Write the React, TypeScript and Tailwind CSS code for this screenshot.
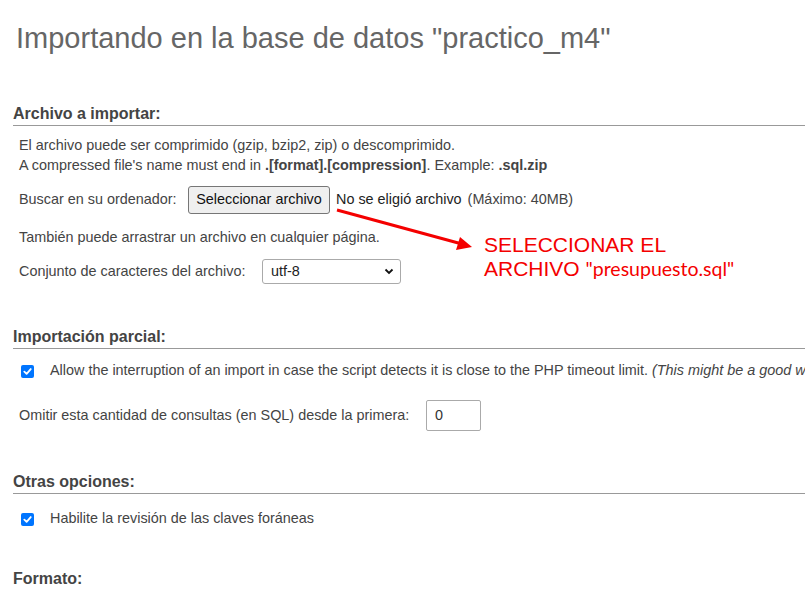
import React from "react";

function Check() {
  return (
    <span className="flex h-[13px] w-[13px] shrink-0 items-center justify-center rounded-[2px] bg-[#0075ff]">
      <svg width="9" height="9" viewBox="0 0 10 10" fill="none">
        <path d="M1.5 5.2 L4 7.6 L8.6 2.3" stroke="white" strokeWidth="2" strokeLinecap="round" strokeLinejoin="round" />
      </svg>
    </span>
  );
}

function Heading({ children, className = "" }: { children: React.ReactNode; className?: string }) {
  return (
    <div className={`ml-[13px] h-[22px] border-b border-[#999] text-[16px] font-bold leading-[20px] text-[#444] ${className}`}>
      {children}
    </div>
  );
}

export default function App() {
  return (
    <div
      className="relative h-[589px] w-[805px] overflow-hidden whitespace-nowrap bg-white text-[14.4px] text-[#444]"
      style={{ fontFamily: '"Liberation Sans", Arial, sans-serif' }}
    >
      <div className="flex flex-col">
        <h1 className="ml-[16px] mt-[20px] h-[36px] text-[29px] font-normal leading-[36px] text-[#666]">
          Importando en la base de datos "practico_m4"
        </h1>

        <Heading className="mt-[48px]">Archivo a importar:</Heading>
        <div className="ml-[19px] mt-[9px] leading-[20px]">
          <div>El archivo puede ser comprimido (gzip, bzip2, zip) o descomprimido.</div>
          <div>
            A compressed file's name must end in <b>.[format].[compression]</b>. Example: <b>.sql.zip</b>
          </div>
        </div>

        <div className="ml-[19px] mt-[11px] flex h-[28px] items-center">
          <span className="w-[169px] shrink-0">Buscar en su ordenador:</span>
          <span className="flex h-[28px] w-[142px] shrink-0 items-center justify-center rounded-[3px] border border-[#767676] bg-[#efefef] text-[#111]">
            Seleccionar archivo
          </span>
          <span className="ml-[6px] text-[#222]">No se eligió archivo</span>
          <span className="ml-[6px]">(Máximo: 40MB)</span>
        </div>

        <div className="ml-[19px] mt-[13px] h-[20px] leading-[20px]">
          También puede arrastrar un archivo en cualquier página.
        </div>

        <div className="ml-[19px] mt-[12px] flex h-[25px] items-center">
          <span className="w-[243px] shrink-0">Conjunto de caracteres del archivo:</span>
          <span className="flex h-[25px] w-[139px] items-center justify-between rounded-[3px] border border-[#aaa] pl-[8px] pr-[6px] text-[#222]">
            utf-8
            <svg width="10" height="7" viewBox="0 0 10 7" fill="none">
              <path d="M1.5 1.5 L5 5 L8.5 1.5" stroke="#111" strokeWidth="1.8" />
            </svg>
          </span>
        </div>

        <Heading className="mt-[43px]">Importación parcial:</Heading>
        <div className="ml-[21px] mt-[12px] flex h-[20px] items-center">
          <Check />
          <span className="ml-[16px]">
            Allow the interruption of an import in case the script detects it is close to the PHP timeout limit.{" "}
            <i>(This might be a good way to import large files, however it can break transactions.)</i>
          </span>
        </div>

        <div className="ml-[19px] mt-[19px] flex h-[31px] items-center">
          <span className="w-[407px] shrink-0">Omitir esta cantidad de consultas (en SQL) desde la primera:</span>
          <span className="flex h-[31px] w-[55px] items-center rounded-[2px] border border-[#aaa] pl-[8px] text-[#333]">
            0
          </span>
        </div>

        <Heading className="mt-[41px]">Otras opciones:</Heading>
        <div className="ml-[21px] mt-[15px] flex h-[20px] items-center">
          <Check />
          <span className="ml-[16px]">Habilite la revisión de las claves foráneas</span>
        </div>

        <Heading className="mt-[40px]">Formato:</Heading>
      </div>

      <svg className="absolute left-0 top-0" width="805" height="589">
        <line x1="337" y1="210" x2="462" y2="244" stroke="#f40000" strokeWidth="3" />
        <path d="M472 247 L456 250 L460 237 Z" fill="#f40000" />
      </svg>
      <div className="absolute left-[484px] top-[233px] text-[21px] leading-[24px] text-[#f40000]">
        <div>SELECCIONAR EL</div>
        <div>
          ARCHIVO <span className="text-[19.5px]" style={{ fontFamily: "Lato, sans-serif" }}>"presupuesto.sql"</span>
        </div>
      </div>
    </div>
  );
}
